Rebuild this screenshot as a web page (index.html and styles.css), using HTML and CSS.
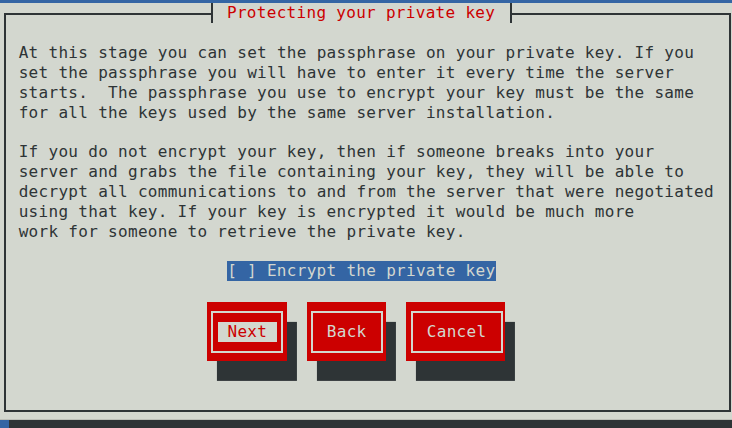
FILE: index.html
```html
<!DOCTYPE html>
<html lang="en">
<head>
<meta charset="utf-8">
<title>Protecting your private key</title>
<link rel="stylesheet" href="styles.css">
</head>
<body>
<div class="topbar"></div>
<div class="window">
  <div class="titlebar">
    <span class="edge edge-left"></span>
    <span class="tee"></span>
    <span class="title">Protecting your private key</span>
    <span class="tee"></span>
    <span class="edge edge-right"></span>
  </div>
  <div class="body">
<p class="text">At this stage you can set the passphrase on your private key. If you
set the passphrase you will have to enter it every time the server
starts.  The passphrase you use to encrypt your key must be the same
for all the keys used by the same server installation.</p>
<p class="text">If you do not encrypt your key, then if someone breaks into your
server and grabs the file containing your key, they will be able to
decrypt all communications to and from the server that were negotiated
using that key. If your key is encrypted it would be much more
work for someone to retrieve the private key.</p>
    <div class="check"><span class="check-label">[ ] Encrypt the private key</span></div>
    <div class="buttons">
      <div class="btn btn-8"><div class="frame"><span class="label label-focus"> Next </span></div></div>
      <div class="btn btn-8"><div class="frame"><span class="label"> Back </span></div></div>
      <div class="btn btn-10"><div class="frame"><span class="label"> Cancel </span></div></div>
    </div>
  </div>
</div>
<div class="shadowrow">
  <span class="shadow-gap"></span>
  <span class="shadow-fill"></span>
</div>
</body>
</html>
```
FILE: styles.css
```css
:root {
  --cw: 9.93px;
  --rh: 19.9px;
  --bg: #d3d7cf;
  --ink: #2e3436;
  --red: #cc0000;
  --blue: #3465a4;
}

html, body {
  margin: 0;
  padding: 0;
}

body {
  width: 732px;
  height: 428px;
  overflow: hidden;
  background: var(--bg);
  font-family: "DejaVu Sans Mono", monospace;
  font-size: 16px;
  letter-spacing: 0.3px;
  line-height: var(--rh);
  color: var(--ink);
}

.topbar {
  height: 3px;
  background: var(--blue);
}

.window {
  margin-left: 4px;
  width: 727px;
}

.titlebar {
  display: flex;
  height: var(--rh);
}

.edge {
  margin-top: 10px;
  border-top: 2px solid var(--ink);
}

.edge-left {
  flex: 0 0 205px;
  border-left: 2px solid var(--ink);
}

.edge-right {
  flex: 1;
  border-right: 2px solid var(--ink);
}

.tee {
  flex: 0 0 2px;
  background: var(--ink);
}

.title {
  color: var(--red);
  white-space: pre;
  padding-left: 14px;
  padding-right: 14.7px;
}

.body {
  height: 389.1px;
  box-sizing: border-box;
  border: 2px solid var(--ink);
  border-top: 0;
  padding: var(--rh) 0 0 12.7px;
}

.text {
  margin: 0 0 var(--rh);
  white-space: pre;
}

.check {
  display: flex;
  height: var(--rh);
  margin-top: -1px;
  margin-bottom: calc(var(--rh) + 1px);
  padding-left: calc(21 * var(--cw));
  white-space: pre;
}

.check-label {
  display: block;
  height: var(--rh);
  padding-right: 0.5px;
  background: var(--blue);
  color: #d3d7cf;
}

.buttons {
  display: flex;
  gap: calc(2 * var(--cw));
  margin-left: calc(19 * var(--cw));
}

.btn {
  height: calc(3 * var(--rh));
  box-sizing: border-box;
  background: var(--red);
  padding: 9.2px 3.4px 8px 4px;
  box-shadow: var(--cw) var(--rh) 0 var(--ink);
}

.btn-8 {
  width: calc(8 * var(--cw));
}

.btn-10 {
  width: calc(10 * var(--cw));
  padding-left: 4.7px;
  padding-right: 2.6px;
}

.frame {
  height: 100%;
  box-sizing: border-box;
  border: 2px solid var(--bg);
  display: flex;
  align-items: center;
  justify-content: center;
}

.label {
  white-space: pre;
  color: var(--bg);
  height: var(--rh);
}

.label-focus {
  background: var(--bg);
  color: var(--red);
}

.shadowrow {
  display: flex;
  margin-top: 7px;
  height: 9px;
  border-top: 1px solid #bcbfb8;
}

.shadow-gap {
  flex: 0 0 8.7px;
  background: var(--blue);
}

.shadow-fill {
  flex: 1;
  background: var(--ink);
}
```
